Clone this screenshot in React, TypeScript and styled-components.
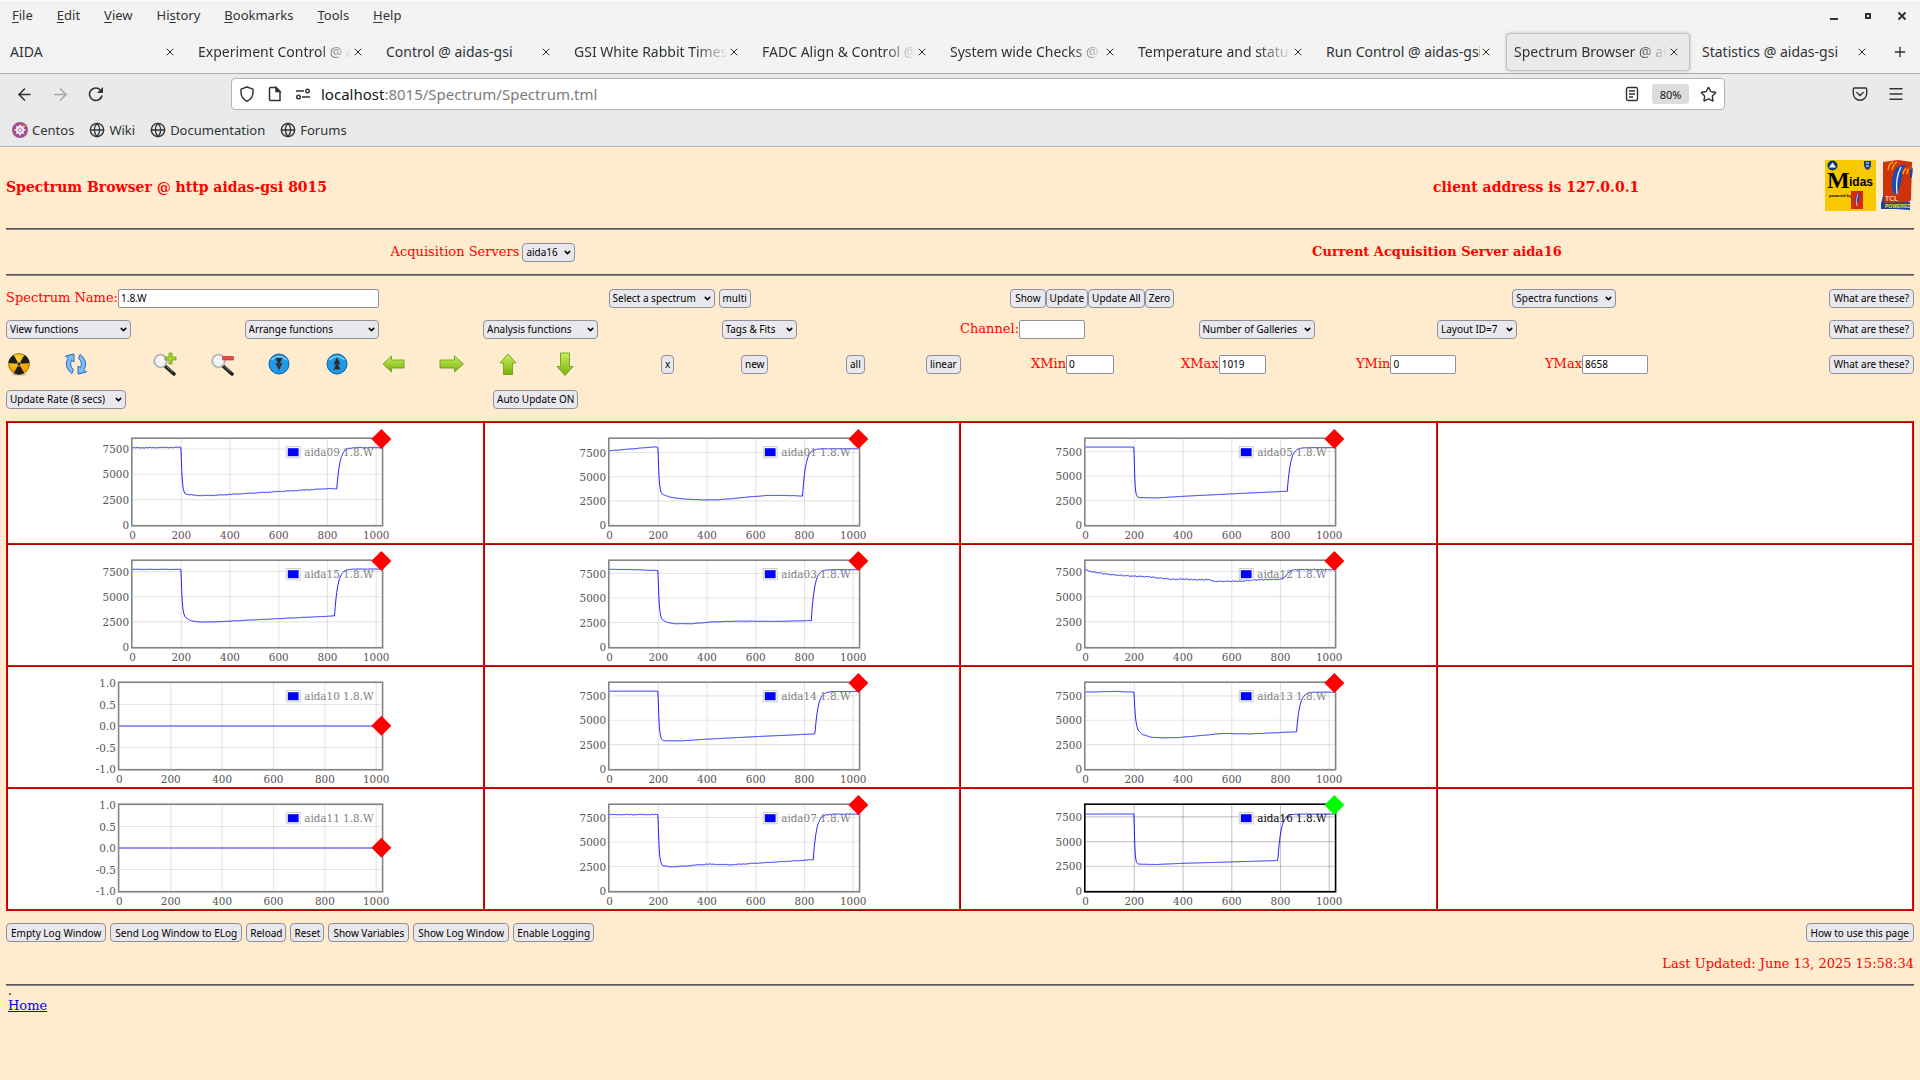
import React, { useId } from 'react';
import styled, { createGlobalStyle } from 'styled-components';
import { ArrowLeft, ArrowRight, ChevronDown, Globe, Menu, Plus, Star, X } from 'lucide-react';

const sans = `'Noto Sans', 'Open Sans', sans-serif`;
const serif = `'DejaVu Serif', serif`;
const ink = '#2e3436';

const GlobalStyle = createGlobalStyle`
  * { box-sizing: border-box; }
  body { margin: 0; background: #ffebcd; }
  button, input, select { margin: 0; font-family: ${sans}; }
`;

/* ---------- browser window ---------- */

const Window = styled.div`
  min-height: 100vh;
  background: #ffebcd;
`;

const Chrome = styled.header`
  font-family: ${sans};
  color: ${ink};
  border-top: 1px solid #fcfcfc;
`;

const MenuBar = styled.nav`
  display: flex;
  align-items: center;
  height: 29px;
  padding: 0 8px 2px 0;
  background: #f3f3f3;
`;

const MenuItem = styled.button`
  padding: 0 12px;
  border: 0;
  background: none;
  color: ${ink};
  font-size: 13px;
  line-height: 20px;

  u {
    text-underline-offset: 2px;
  }
`;

const WindowButtons = styled.div`
  display: flex;
  gap: 14px;
  margin-left: auto;
`;

const IconButton = styled.button<{ $size: number; $dim?: boolean }>`
  display: grid;
  place-items: center;
  flex: none;
  width: ${(p) => p.$size}px;
  height: ${(p) => p.$size}px;
  padding: 0;
  border: 0;
  background: none;
  color: ${(p) => (p.$dim ? '#a6a8a8' : ink)};
`;

const TabStrip = styled.div`
  display: flex;
  align-items: center;
  height: 43px;
  background: #f3f3f3;
`;

const Tab = styled.div<{ $active?: boolean }>`
  display: flex;
  align-items: center;
  flex: 0 1 184px;
  min-width: 0;
  height: 38px;
  margin: 0 2px;
  padding: 0 9px 0 7px;
  border: 1px solid ${(p) => (p.$active ? '#c0bfca' : 'transparent')};
  border-radius: 4px;
  background: ${(p) => (p.$active ? '#eaeaea' : 'none')};
  box-shadow: ${(p) => (p.$active ? '0 0 3px rgba(128, 128, 142, 0.5)' : 'none')};
`;

const TabTitle = styled.button<{ $fade?: boolean }>`
  flex: 1;
  min-width: 0;
  padding: 0;
  border: 0;
  overflow: hidden;
  background: none;
  color: ${ink};
  font-size: 14px;
  line-height: 24px;
  text-align: left;
  white-space: nowrap;
  mask-image: ${(p) => (p.$fade ? 'linear-gradient(to left, transparent, #000 32px)' : 'none')};
`;

const NavBar = styled.div`
  display: flex;
  align-items: center;
  gap: 12px;
  height: 41px;
  padding: 0 12px;
  border-top: 1px solid #a9a9ab;
  background: #eaeaea;
`;

const Location = styled.div`
  display: flex;
  align-items: center;
  flex: 1;
  gap: 4px;
  height: 32px;
  margin: 0 111px;
  padding: 0 4px 0 3px;
  border: 1px solid #b3b3b5;
  border-radius: 4px;
  background: #fff;
`;

const Address = styled.div`
  flex: 1;
  padding-left: 2px;
  font-size: 15px;
  line-height: 20px;
  color: #7b7b7b;

  b {
    font-weight: 400;
    color: #15141a;
  }
`;

const Zoom = styled.button`
  width: 37px;
  height: 20px;
  margin: 0 3px 0 4px;
  padding: 0;
  border: 0;
  border-radius: 3px;
  background: #dcdcdc;
  color: #15141a;
  font-size: 11px;
`;

const Bookmarks = styled.nav`
  display: flex;
  align-items: center;
  gap: 15px;
  height: 33px;
  padding: 0 12px;
  border-bottom: 1px solid #b3b3b5;
  background: #eaeaea;
`;

const Bookmark = styled.a`
  display: flex;
  align-items: center;
  gap: 4px;
  color: ${ink};
  font-size: 13px;
  line-height: 20px;
  text-decoration: none;
`;

/* ---------- page ---------- */

const Page = styled.main`
  padding: 0 6px 8px;
  color: red;
  font: 13px/20px ${serif};
`;

const Rule = styled.hr`
  height: 2px;
  margin: 0;
  border: 0;
  border-top: 1px solid #55555a;
  background: #86868a;
`;

const TitleRow = styled.div`
  display: grid;
  grid-template-columns: minmax(0, 1fr) 481px;
  align-items: center;
  height: 81px;
  padding-bottom: 2px;
`;

const Title = styled.h1`
  margin: 0;
  font-size: 14px;
  line-height: 20px;
`;

const TitleSide = styled.div`
  display: flex;
  align-items: center;
  justify-content: space-between;
`;

const Logos = styled.div`
  display: flex;
  gap: 5px;
  padding: 0 1px 2px 0;
`;

const ServerRow = styled.div`
  display: grid;
  grid-template-columns: 1fr 1fr;
  align-items: center;
  justify-items: center;
  height: 44px;
`;

const Controls = styled.section`
  padding: 6px 0;
`;

const Cells = styled.div<{ $columns: string; $height: number }>`
  display: grid;
  grid-template-columns: ${(p) => p.$columns};
  align-items: center;
  height: ${(p) => p.$height}px;
`;

const Cell = styled.div<{ $end?: boolean; $gap?: number }>`
  display: flex;
  align-items: center;
  justify-content: ${(p) => (p.$end ? 'flex-end' : 'flex-start')};
  gap: ${(p) => p.$gap ?? 0}px;
  min-width: 0;
  white-space: nowrap;
`;

const Button = styled.button<{ $roomy?: boolean }>`
  height: 19px;
  padding: 0 ${(p) => (p.$roomy ? 4 : 3)}px;
  border: 1px solid #8f8f9d;
  border-radius: 4px;
  background: #e9e9ed;
  color: #000;
  font-size: 10px;
  line-height: 14px;
  white-space: nowrap;
`;

const ImageButton = styled.button`
  display: block;
  padding: 0;
  border: 0;
  background: none;

  svg {
    display: block;
  }
`;

const SelectBox = styled.span<{ $width: number }>`
  position: relative;
  display: inline-flex;
  width: ${(p) => p.$width}px;

  select {
    appearance: none;
    width: 100%;
    height: 19px;
    padding: 0 3px;
    border: 1px solid #8f8f9d;
    border-radius: 4px;
    background: #e9e9ed;
    color: #000;
    font-size: 10px;
  }

  svg {
    position: absolute;
    top: 5px;
    right: 3px;
    color: #000;
    pointer-events: none;
  }
`;

const TextInput = styled.input<{ $width: number }>`
  width: ${(p) => p.$width}px;
  height: 19px;
  padding: 0 2px;
  border: 1px solid #8f8f9d;
  border-radius: 2px;
  background: #fff;
  color: #000;
  font-size: 10px;
`;

const Gallery = styled.table`
  width: 100%;
  margin: 1px 0 12px;
  border-collapse: collapse;
  table-layout: fixed;
  background: #fff;

  td {
    height: 122px;
    padding: 0;
    border: 2px ridge #ff0000;
    line-height: 0;
    text-align: center;
  }

  svg {
    overflow: visible;
  }
`;

const FooterRow = styled.div`
  display: flex;
  gap: 4px;
  margin-bottom: 12px;

  :last-child {
    margin-left: auto;
  }
`;

const Updated = styled.p`
  margin: 0 0 10px;
  text-align: right;
`;

const PageEnd = styled.footer`
  padding-left: 2px;
  color: #000;

  p {
    margin: 0;
    font-size: 12px;
    line-height: 10px;
  }

  a {
    color: #0000ee;
    line-height: 18px;
  }
`;

function Select({ label, width, name }: { label: string; width: number; name?: string }) {
  return (
    <SelectBox $width={width}>
      <select aria-label={name ?? label} defaultValue={label}>
        <option>{label}</option>
      </select>
      <ChevronDown size={9} strokeWidth={4} />
    </SelectBox>
  );
}

function Field({ label, value, width }: { label: string; value: string; width: number }) {
  const id = useId();
  return (
    <Cell>
      <label htmlFor={id}>{label}</label>
      <TextInput id={id} $width={width} defaultValue={value} />
    </Cell>
  );
}

/* ---------- charts ---------- */

type Point = [number, number];

interface Pulse {
  name: string;
  max: number;
  before: Point[];
  low: Point[];
  rise: number;
  after: number;
  noise: number;
  tau?: number;
  active?: boolean;
}

function lerp(points: Point[], x: number) {
  if (x <= points[0][0]) return points[0][1];
  for (let i = 1; i < points.length; i++) {
    const [x0, y0] = points[i - 1];
    const [x1, y1] = points[i];
    if (x <= x1) return y0 + ((y1 - y0) * (x - x0)) / (x1 - x0);
  }
  return points[points.length - 1][1];
}

function pulseValue(p: Pulse, x: number) {
  const jitter = p.noise * (Math.sin(x * 0.37) + Math.sin(x * 0.83 + 2) + Math.sin(x * 0.11)) * 0.5;
  if (x < 199) return lerp(p.before, x) + jitter;
  if (x < p.rise) {
    const base = lerp(p.low, x);
    const high = p.before[p.before.length - 1][1];
    return base + (high - base) * Math.exp(-(x - 199) / (p.tau ?? 4)) + jitter;
  }
  const base = lerp(p.low, p.rise);
  return p.after - (p.after - base) * Math.exp(-(x - p.rise) / 13) + jitter;
}

const TOP = 20;
const BOTTOM = 127.5;
const RIGHT = 351;

interface PlotProps {
  name: string;
  left: number;
  min: number;
  max: number;
  ticks: [number, string][];
  valueAt: (x: number) => number;
  markerY: number;
  active?: boolean;
}

function Plot({ name, left, min, max, ticks, valueAt, markerY, active }: PlotProps) {
  const sx = (x: number) => left + (x * (344 - left)) / 1000;
  const sy = (y: number) => BOTTOM - ((y - min) * (BOTTOM - TOP)) / (max - min);
  const points: string[] = [];
  for (let x = 0; x <= 1020; x += 2) points.push(`${sx(x).toFixed(2)},${sy(valueAt(x)).toFixed(2)}`);
  const grid = active ? 'rgba(0,0,0,0.22)' : 'rgba(0,0,0,0.1)';
  return (
    <svg width="288" height="120" viewBox="0 0 360 150" fontFamily="DejaVu Serif, serif" fontSize="13" role="img" aria-label={name}>
      {[200, 400, 600, 800, 1000].map((x) => (
        <line key={x} x1={sx(x)} x2={sx(x)} y1={TOP} y2={BOTTOM} stroke={grid} strokeWidth="1.4" />
      ))}
      {ticks.map(([y]) => (
        <line key={y} x1={left} x2={RIGHT} y1={sy(y)} y2={sy(y)} stroke={grid} strokeWidth="1.4" />
      ))}
      <rect x={left - 1} y={TOP - 1} width={RIGHT - left + 2} height={BOTTOM - TOP + 2} fill="none" stroke={active ? '#000' : '#858585'} strokeWidth="2" />
      <g fill="#545454">
        {[0, 200, 400, 600, 800, 1000].map((x) => (
          <text key={x} x={sx(x)} y="145" textAnchor="middle">
            {x}
          </text>
        ))}
        {ticks.map(([y, label]) => (
          <text key={y} x={left - 4.5} y={sy(y) + 5} textAnchor="end">
            {label}
          </text>
        ))}
      </g>
      <polyline points={points.join(' ')} fill="none" stroke="#0000ff" strokeOpacity="0.9" strokeWidth="1.2" strokeLinejoin="round" />
      <rect x="231.5" y="29.500" width="17.500" height="14" fill="#fff" stroke="#ccc" strokeWidth="1.2" />
      <rect x="233.5" y="31.500" width="13.500" height="10" fill="#00f" />
      <text x="254" y="41" fill={active ? '#000' : '#808080'}>
        {name}
      </text>
      <path d={`M350.500 ${markerY - 12.5}l12.5 12.5-12.5 12.5-12.5-12.5z`} fill={active ? '#0f0' : '#f00'} />
    </svg>
  );
}

function FlatPlot({ name }: { name: string }) {
  return (
    <Plot
      name={name}
      left={23}
      min={-1}
      max={1}
      ticks={[[1, '1.0'], [0.5, '0.5'], [0, '0.0'], [-0.5, '-0.5'], [-1, '-1.0']]}
      valueAt={() => 0}
      markerY={73.5}
    />
  );
}

function PulsePlot({ pulse }: { pulse: Pulse }) {
  return (
    <Plot
      name={pulse.name}
      left={39.5}
      min={0}
      max={pulse.max}
      ticks={[[7500, '7500'], [5000, '5000'], [2500, '2500'], [0, '0']]}
      valueAt={(x) => (pulse.low.length ? pulseValue(pulse, x) : lerp(pulse.before, x) + pulse.noise * (Math.sin(x * 0.9) + Math.sin(x * 0.23) + Math.sin(x * 0.41)) * 0.5)}
      markerY={TOP}
      active={pulse.active}
    />
  );
}

const pulses: Record<string, Pulse> = {
  aida09: { name: 'aida09 1.8.W', max: 8483, before: [[0, 7610], [199, 7660]], low: [[199, 3150], [225, 3000], [280, 2900], [340, 2930], [700, 3440], [800, 3590], [838, 3570]], rise: 838, after: 7640, noise: 32 },
  aida01: { name: 'aida01 1.8.W', max: 8903, before: [[0, 7680], [100, 7900], [180, 8080], [199, 8040]], low: [[199, 3300], [250, 2880], [300, 2700], [380, 2600], [440, 2610], [500, 2720], [560, 2880], [650, 3060], [720, 3060], [792, 3000]], rise: 792, after: 7890, noise: 15 },
  aida05: { name: 'aida05 1.8.W', max: 8782, before: [[0, 7960], [199, 7960]], low: [[199, 2950], [220, 2800], [290, 2760], [400, 2930], [600, 3180], [828, 3450]], rise: 828, after: 7900, noise: 0, tau: 3 },
  aida15: { name: 'aida15 1.8.W', max: 8550, before: [[0, 7720], [199, 7720]], low: [[199, 3300], [212, 3000], [240, 2600], [280, 2480], [340, 2500], [500, 2700], [700, 2940], [829, 3090]], rise: 829, after: 7750, noise: 15 },
  aida03: { name: 'aida03 1.8.W', max: 8782, before: [[0, 7930], [100, 7900], [199, 7800]], low: [[199, 3200], [212, 2800], [240, 2480], [270, 2380], [340, 2380], [420, 2560], [520, 2640], [700, 2620], [828, 2700]], rise: 828, after: 7900, noise: 15 },
  aida12: { name: 'aida12 1.8.W', max: 8550, before: [[0, 7660], [30, 7460], [100, 7200], [180, 7060], [260, 6980], [300, 6860], [360, 6720], [400, 6760], [450, 6680], [510, 6700], [525, 6520], [640, 6540], [700, 6680], [805, 6740], [820, 7000], [840, 7580], [870, 7700], [1020, 7690]], low: [], rise: 0, after: 0, noise: 45 },
  aida14: { name: 'aida14 1.8.W', max: 8818, before: [[0, 7980], [199, 7980]], low: [[199, 3050], [220, 2900], [290, 2880], [400, 3060], [600, 3320], [843, 3600]], rise: 843, after: 7950, noise: 0 },
  aida13: { name: 'aida13 1.8.W', max: 8818, before: [[0, 7880], [120, 7960], [199, 7880]], low: [[199, 4300], [215, 3900], [235, 3520], [270, 3260], [310, 3200], [380, 3220], [470, 3420], [560, 3640], [680, 3600], [866, 3820]], rise: 866, after: 7880, noise: 15, tau: 5 },
  aida07: { name: 'aida07 1.8.W', max: 8782, before: [[0, 7800], [199, 7810]], low: [[199, 2800], [215, 2600], [250, 2460], [300, 2530], [400, 2740], [500, 2680], [640, 2900], [760, 3080], [836, 3200]], rise: 836, after: 7850, noise: 32 },
  aida16: { name: 'aida16 1.8.W', max: 8699, before: [[0, 7780], [199, 7790]], low: [[199, 2800], [215, 2720], [290, 2680], [400, 2800], [600, 2940], [789, 3080]], rise: 789, after: 7780, noise: 0, active: true, tau: 3 },
};

const gallery = [
  ['aida09', 'aida01', 'aida05', ''],
  ['aida15', 'aida03', 'aida12', ''],
  ['aida10', 'aida14', 'aida13', ''],
  ['aida11', 'aida07', 'aida16', ''],
];

/* ---------- icons and logos ---------- */

function MidasLogo() {
  return (
    <svg width="51" height="51" viewBox="0 0 51 51" role="img" aria-label="Midas">
      <rect width="51" height="51" fill="#f8c800" />
      <circle cx="7.5" cy="5.5" r="5" fill="#0b3a75" />
      <path d="M4 7.5l3.5-5 3.5 5z" fill="#fff" />
      <path d="M39 1h7v5q-1 3-3.500 4Q40 9 39 6z" fill="#17408b" />
      <path d="M41 3h3M41 6h3" stroke="#fff" strokeWidth="1" />
      <text x="2" y="28" fontFamily="Liberation Serif, serif" fontSize="24" fontWeight="bold">M</text>
      <text x="24" y="26" fontFamily="Liberation Sans, sans-serif" fontSize="12" fontWeight="bold">idas</text>
      <text x="4" y="37" fontFamily="Liberation Sans, sans-serif" fontSize="4" fontWeight="bold">powered by</text>
      <rect x="26" y="31" width="12" height="18" fill="#d42a0c" />
      <path d="M31 45q-2-6 1-11l3-1-1 6z" fill="#2a3fb0" />
      <path d="M33 34q-3 6-1 12" stroke="#fff" strokeWidth=".7" fill="none" />
    </svg>
  );
}

function TclLogo() {
  return (
    <svg width="32" height="51" viewBox="0 0 32 51" role="img" aria-label="Tcl powered">
      <path d="M2 2L17 0l14 2-1 38-5 4L2 43z" fill="#cf3309" />
      <path d="M0 43l29-1 0 8-14-1-15 0z" fill="#1744a5" />
      <path d="M2 36l1-2v10H0zM29 10l3-2-1 9-2 2z" fill="#1744a5" />
      <path d="M12 33Q9 20 14 10q4-6 11-5-5 6-4 12-1 9-5 18z" fill="#1d49b8" />
      <path d="M20 7q-6 11-4 27" stroke="#fff" strokeWidth="1.200" fill="none" />
      <path d="M7 10q1-7 5-8M11 10q1-6 5-8M22 14q1-5 3-5M26 14q0-4 2-5" stroke="#f7b500" strokeWidth="1.300" fill="none" />
      <text x="4" y="41" fontFamily="Liberation Sans, sans-serif" fontSize="7" fill="#fff">TCL</text>
      <text x="4" y="48" fontFamily="Liberation Sans, sans-serif" fontSize="5" fontWeight="bold" fill="#ffe600">POWERED</text>
    </svg>
  );
}

function RadiationIcon() {
  return (
    <svg width="26" height="24" viewBox="0 0 26 24">
      <defs>
        <radialGradient id="rad" cx=".4" cy=".3">
          <stop offset="0" stopColor="#ffe24a" />
          <stop offset="1" stopColor="#f0a400" />
        </radialGradient>
      </defs>
      <ellipse cx="13" cy="22.500" rx="8" ry="1.200" fill="#0003" />
      <circle cx="13" cy="12" r="10.500" fill="url(#rad)" stroke="#5b4300" strokeWidth=".6" />
      <path d="M13 12L2.600 11A10.500 10.500 0 0 1 7.500 3zM13 12l10.400-1a10.500 10.500 0 0 0-4.900-8zM13 12L7.800 21a10.500 10.500 0 0 0 10.400 0z" fill="#1c1c1c" />
      <circle cx="13" cy="12" r="2" fill="#1c1c1c" stroke="#f8c51c" strokeWidth=".8" />
    </svg>
  );
}

function RefreshIcon() {
  return (
    <svg width="26" height="24" viewBox="0 0 26 24" fill="#7fbcf3" stroke="#2468b8" strokeWidth="1">
      <path d="M9 21.500Q2.500 17 3.500 10L5 6.500 2.500 4 11 2v8L8.500 8Q6 14 10.500 17.500z" />
      <path d="M17 2.500Q23.500 7 22.500 14L21 17.500l2.500 2.500-8.500 2v-8l2.500 2Q20 10 15.500 6.500z" />
    </svg>
  );
}

function MagnifierIcon({ minus }: { minus?: boolean }) {
  return (
    <svg width="26" height="24" viewBox="0 0 26 24">
      <path d="M13 14l9 8" stroke="#1e1e1e" strokeWidth="3.400" strokeLinecap="round" />
      <path d="M14.500 14.500l6 5.300" stroke="#aaa" strokeWidth=".8" />
      <circle cx="8.500" cy="9" r="6.300" fill="#f4f4f6" stroke="#b4b4b8" strokeWidth="1.800" />
      <path d="M5 9q0-4 4-4" stroke="#fff" strokeWidth="1.500" fill="none" />
      {minus ? (
        <rect x="12.500" y="4.500" width="11" height="3.500" rx=".5" fill="#e84a3c" stroke="#b3271c" strokeWidth=".6" />
      ) : (
        <path d="M17 1h3v4h4v3h-4v4h-3V8h-4V5h4z" fill="#a3d820" stroke="#5e9210" strokeWidth=".7" />
      )}
    </svg>
  );
}

function ScrollIcon({ up }: { up?: boolean }) {
  return (
    <svg width="26" height="24" viewBox="0 0 26 24">
      <circle cx="12" cy="12" r="10" fill="#1c9bea" stroke="#0d5ea8" strokeWidth="1" />
      <path d="M4.500 8q7.500-7 15 0" stroke="#7fcbfa" strokeWidth="1.500" fill="none" />
      <g fill="#262b33" stroke="#5a6a7a" strokeWidth=".4">
        <path d={up ? 'M12 10l3.500 7.500h-7z' : 'M12 18.500L8.500 11h7z'} />
        <path d={up ? 'M12 5l3.500 7.500h-7z' : 'M12 13.500L8.500 6h7z'} />
      </g>
    </svg>
  );
}

const arrowPaths = {
  left: 'M1 12L9.500 4V8H22v8H9.500v4z',
  right: 'M24.500 12L15.500 4V8H1v8h14.500v4z',
  up: 'M13 2l8 9h-3.500V22.500h-9V11H5z',
  down: 'M13 23.500L5 14.500h3.500V1h9v13.500H21z',
};

function GreenArrow({ direction }: { direction: keyof typeof arrowPaths }) {
  return (
    <svg width="26" height="24" viewBox="0 0 26 24">
      <defs>
        <linearGradient id={`green-${direction}`} x2="0" y2="1">
          <stop offset="0" stopColor="#cdee5c" />
          <stop offset="1" stopColor="#74b30c" />
        </linearGradient>
      </defs>
      <path d={arrowPaths[direction]} fill={`url(#green-${direction})`} stroke="#6f9f20" strokeWidth=".9" />
    </svg>
  );
}

function CentosIcon() {
  return (
    <svg width="16" height="16" viewBox="0 0 16 16">
      <circle cx="8" cy="8" r="8" fill="#a14f8c" />
      <g fill="none" stroke="#fff" strokeWidth="1.100">
        <rect x="5" y="5" width="6" height="6" />
        <rect x="5" y="5" width="6" height="6" transform="rotate(45 8 8)" />
        <path d="M8 2v12M2 8h12M3.800 3.800l8.400 8.400M12.200 3.800l-8.400 8.400" strokeWidth=".7" />
      </g>
      <path d="M10 3h3v3z" fill="#efa724" />
    </svg>
  );
}

const tabs: { title: string; fade?: boolean; active?: boolean }[] = [
  { title: 'AIDA' },
  { title: 'Experiment Control @ a', fade: true },
  { title: 'Control @ aidas-gsi' },
  { title: 'GSI White Rabbit Times', fade: true },
  { title: 'FADC Align & Control @', fade: true },
  { title: 'System wide Checks @', fade: true },
  { title: 'Temperature and status', fade: true },
  { title: 'Run Control @ aidas-gsi' },
  { title: 'Spectrum Browser @ ai', fade: true, active: true },
  { title: 'Statistics @ aidas-gsi' },
];

const menus: [string, string, string][] = [
  ['', 'F', 'ile'],
  ['', 'E', 'dit'],
  ['', 'V', 'iew'],
  ['Hi', 's', 'tory'],
  ['', 'B', 'ookmarks'],
  ['', 'T', 'ools'],
  ['', 'H', 'elp'],
];

function BrowserChrome() {
  return (
    <Chrome>
      <MenuBar>
        {menus.map(([before, key, after]) => (
          <MenuItem key={after}>
            {before}
            <u>{key}</u>
            {after}
          </MenuItem>
        ))}
        <WindowButtons>
          <IconButton $size={20} aria-label="Minimize">
            <svg width="20" height="20" viewBox="0 0 20 20"><path d="M6 14h8" stroke="currentColor" strokeWidth="2" /></svg>
          </IconButton>
          <IconButton $size={20} aria-label="Maximize">
            <svg width="20" height="20" viewBox="0 0 20 20"><rect x="8" y="9" width="4" height="4" fill="none" stroke="currentColor" strokeWidth="2" /></svg>
          </IconButton>
          <IconButton $size={20} aria-label="Close window">
            <svg width="20" height="20" viewBox="0 0 20 20"><path d="M6.500 7.500l7 7M13.500 7.500l-7 7" stroke="currentColor" strokeWidth="2" /></svg>
          </IconButton>
        </WindowButtons>
      </MenuBar>
      <TabStrip>
        {tabs.map((tab) => (
          <Tab key={tab.title} $active={tab.active}>
            <TabTitle $fade={tab.fade}>{tab.title}</TabTitle>
            <IconButton $size={12} aria-label={`Close ${tab.title}`}>
              <X size={12} strokeWidth={2} />
            </IconButton>
          </Tab>
        ))}
        <IconButton $size={40} aria-label="New tab">
          <Plus size={16} strokeWidth={2} />
        </IconButton>
      </TabStrip>
      <NavBar>
        <IconButton $size={24} aria-label="Back">
          <ArrowLeft size={19} strokeWidth={2} />
        </IconButton>
        <IconButton $size={24} $dim aria-label="Forward">
          <ArrowRight size={19} strokeWidth={2} />
        </IconButton>
        <IconButton $size={24} aria-label="Reload page">
          <svg width="16" height="16" viewBox="0 0 16 16" fill="none">
            <path d="M14 9.500A6.300 6.300 0 1 1 12.500 4" stroke="currentColor" strokeWidth="1.600" />
            <path d="M15 1v6H9z" fill="currentColor" />
          </svg>
        </IconButton>
        <Location>
          <IconButton $size={24} aria-label="Tracking protection">
            <svg width="16" height="16" viewBox="0 0 16 16" fill="none" stroke="currentColor" strokeWidth="1.400">
              <path d="M8 1l6 2.200v3.300c0 4-2.500 7-6 8.800-3.500-1.800-6-4.800-6-8.800V3.200z" strokeLinejoin="round" />
            </svg>
          </IconButton>
          <IconButton $size={24} aria-label="Page information">
            <svg width="14" height="16" viewBox="0 0 14 16" fill="none" stroke="currentColor" strokeWidth="1.500">
              <path d="M2.500 1.500H8L12 5.500V14.500H2.500Q1.500 14.500 1.500 13.500V2.500Q1.500 1.500 2.500 1.500z" />
              <path d="M8 1.500V5.500h4z" fill="currentColor" />
            </svg>
          </IconButton>
          <IconButton $size={24} aria-label="Permissions">
            <svg width="16" height="12" viewBox="0 0 16 12" fill="none" stroke="currentColor" strokeWidth="1.400">
              <path d="M1 3h8M7 9h8" />
              <circle cx="12.500" cy="3" r="1.800" />
              <circle cx="3.500" cy="9" r="1.800" />
            </svg>
          </IconButton>
          <Address>
            <b>localhost</b>:8015/Spectrum/Spectrum.tml
          </Address>
          <IconButton $size={24} aria-label="Reader view">
            <svg width="14" height="16" viewBox="0 0 14 16" fill="none" stroke="currentColor" strokeWidth="1.400">
              <rect x="1.500" y="1.500" width="11" height="13" rx="1.500" />
              <path d="M4 5h6M4 8h6M4 11h4" />
            </svg>
          </IconButton>
          <Zoom>80%</Zoom>
          <IconButton $size={24} aria-label="Bookmark this page">
            <Star size={17} strokeWidth={2} />
          </IconButton>
        </Location>
        <IconButton $size={24} aria-label="Save to Pocket">
          <svg width="16" height="16" viewBox="0 0 16 16" fill="none" stroke="currentColor" strokeWidth="1.400">
            <path d="M2.500 2h11q1.200 0 1.200 1.200V7.500a6.700 6.700 0 0 1-13.400 0V3.200Q1.300 2 2.500 2z" />
            <path d="M4.800 6.500L8 9.500l3.200-3" strokeLinecap="round" />
          </svg>
        </IconButton>
        <IconButton $size={24} aria-label="Application menu">
          <Menu size={18} strokeWidth={2} />
        </IconButton>
      </NavBar>
      <Bookmarks>
        <Bookmark href="#centos">
          <CentosIcon />
          Centos
        </Bookmark>
        {['Wiki', 'Documentation', 'Forums'].map((name) => (
          <Bookmark key={name} href={`#${name.toLowerCase()}`}>
            <Globe size={16} strokeWidth={2} />
            {name}
          </Bookmark>
        ))}
      </Bookmarks>
    </Chrome>
  );
}

const iconColumns =
  '57fr 89fr 58fr 57fr 58fr 57fr 57fr 56fr 57fr 109fr 80fr 105fr 80fr 105fr 150fr 175fr 189fr 284fr 85fr';

export default function App() {
  return (
    <Window>
      <GlobalStyle />
      <BrowserChrome />
      <Page>
        <TitleRow>
          <Title>Spectrum Browser @ http aidas-gsi 8015</Title>
          <TitleSide>
            <Title as="strong">client address is 127.0.0.1</Title>
            <Logos>
              <MidasLogo />
              <TclLogo />
            </Logos>
          </TitleSide>
        </TitleRow>
        <Rule />
        <ServerRow>
          <Cell $gap={3}>
            Acquisition Servers
            <Select label="aida16" name="Acquisition Servers" width={53} />
          </Cell>
          <strong>Current Acquisition Server aida16</strong>
        </ServerRow>
        <Rule />
        <Controls>
          <Cells $columns="6fr 4fr 5fr 3fr 1fr" $height={32}>
            <Field label="Spectrum Name:" value="1.8.W" width={261} />
            <Cell $gap={4}>
              <Select label="Select a spectrum" width={106} />
              <Button>multi</Button>
            </Cell>
            <Cell>
              <Button $roomy>Show</Button>
              <Button>Update</Button>
              <Button>Update All</Button>
              <Button>Zero</Button>
            </Cell>
            <Select label="Spectra functions" width={104} />
            <Cell $end>
              <Button $roomy>What are these?</Button>
            </Cell>
          </Cells>
          <Cells $columns="repeat(8, 1fr)" $height={30}>
            <Select label="View functions" width={125} />
            <Select label="Arrange functions" width={134} />
            <Select label="Analysis functions" width={115} />
            <Select label="Tags & Fits" width={75} />
            <Field label="Channel:" value="" width={66} />
            <Select label="Number of Galleries" width={116} />
            <Select label="Layout ID=7" width={80} />
            <Cell $end>
              <Button $roomy>What are these?</Button>
            </Cell>
          </Cells>
          <Cells $columns={iconColumns} $height={40}>
            <Cell><ImageButton aria-label="Radiation"><RadiationIcon /></ImageButton></Cell>
            <Cell><ImageButton aria-label="Refresh"><RefreshIcon /></ImageButton></Cell>
            <Cell><ImageButton aria-label="Zoom in"><MagnifierIcon /></ImageButton></Cell>
            <Cell><ImageButton aria-label="Zoom out"><MagnifierIcon minus /></ImageButton></Cell>
            <Cell><ImageButton aria-label="Scale down"><ScrollIcon /></ImageButton></Cell>
            <Cell><ImageButton aria-label="Scale up"><ScrollIcon up /></ImageButton></Cell>
            <Cell><ImageButton aria-label="Left"><GreenArrow direction="left" /></ImageButton></Cell>
            <Cell><ImageButton aria-label="Right"><GreenArrow direction="right" /></ImageButton></Cell>
            <Cell><ImageButton aria-label="Up"><GreenArrow direction="up" /></ImageButton></Cell>
            <Cell><ImageButton aria-label="Down"><GreenArrow direction="down" /></ImageButton></Cell>
            <Cell><Button>x</Button></Cell>
            <Cell><Button>new</Button></Cell>
            <Cell><Button>all</Button></Cell>
            <Cell><Button>linear</Button></Cell>
            <Field label="XMin" value="0" width={48} />
            <Field label="XMax" value="1019" width={47} />
            <Field label="YMin" value="0" width={66} />
            <Field label="YMax" value="8658" width={66} />
            <Cell $end>
              <Button $roomy>What are these?</Button>
            </Cell>
          </Cells>
          <Cells $columns="487fr 1421fr" $height={30}>
            <Select label="Update Rate (8 secs)" width={120} />
            <Cell>
              <Button>Auto Update ON</Button>
            </Cell>
          </Cells>
        </Controls>
        <Gallery>
          <tbody>
            {gallery.map((row) => (
              <tr key={row[0]}>
                {row.map((name, i) => (
                  <td key={i}>
                    {pulses[name] ? <PulsePlot pulse={pulses[name]} /> : name && <FlatPlot name={`${name} 1.8.W`} />}
                  </td>
                ))}
              </tr>
            ))}
          </tbody>
        </Gallery>
        <FooterRow>
          <Button $roomy>Empty Log Window</Button>
          <Button $roomy>Send Log Window to ELog</Button>
          <Button>Reload</Button>
          <Button>Reset</Button>
          <Button $roomy>Show Variables</Button>
          <Button $roomy>Show Log Window</Button>
          <Button>Enable Logging</Button>
          <Button $roomy>How to use this page</Button>
        </FooterRow>
        <Updated>Last Updated: June 13, 2025 15:58:34</Updated>
        <Rule />
        <PageEnd>
          <p>.</p>
          <a href="#home">Home</a>
        </PageEnd>
      </Page>
    </Window>
  );
}
